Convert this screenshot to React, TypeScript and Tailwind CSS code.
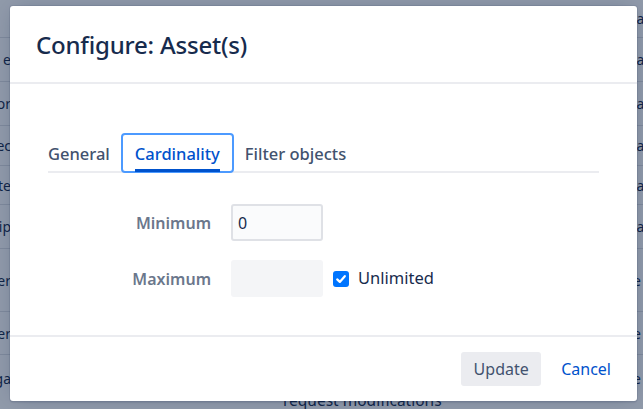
import React from "react";

const rows = [
  { cls: "h-[38px] items-center", l: "", r: "ia" },
  { cls: "h-[44px] items-center", l: "e", r: "ia" },
  { cls: "h-[44px] items-center", l: "or", r: "ia" },
  { cls: "h-[40px] items-center", l: "ec", r: "ia" },
  { cls: "h-[39px] items-center", l: "te", r: "ia" },
  { cls: "h-[44px] items-center", l: "rip", r: "ia" },
  { cls: "h-[63px] items-center", l: "er", r: "e" },
  { cls: "h-[43px] items-center", l: "er", r: "e" },
];

function Check() {
  return (
    <div className="w-[16px] h-[16px] rounded-[3px] bg-[#0075ff] flex items-center justify-center">
      <svg width="12" height="12" viewBox="0 0 12 12" fill="none">
        <path d="M2.2 6.4 L4.8 8.9 L9.8 3.2" stroke="white" strokeWidth="2.2" strokeLinecap="round" strokeLinejoin="round" />
      </svg>
    </div>
  );
}

export default function App() {
  return (
    <div
      className="relative w-[643px] h-[409px] overflow-hidden bg-white"
      style={{ fontFamily: '"Noto Sans", "Open Sans", sans-serif' }}
    >
      {/* background table */}
      <div className="flex flex-col text-[14px] text-[#172b4d]">
        {rows.map((row, i) => (
          <div key={i} className={`flex justify-between border-b border-[#dfe1e6] ${row.cls}`}>
            <div className="w-[11px] flex justify-end overflow-hidden whitespace-nowrap">{row.l}</div>
            <div className="w-[10px] whitespace-nowrap">{row.r}</div>
          </div>
        ))}
        <div className="flex justify-between h-[60px] pt-[14px] leading-[20px]">
          <div className="w-[11px] flex justify-end overflow-hidden whitespace-nowrap">ga</div>
          <div className="flex flex-col text-[15.5px] leading-[21px] ml-[272px]">
            <span>Approve or</span>
            <span>request modifications</span>
          </div>
          <div className="flex-1" />
          <div className="w-[10px] whitespace-nowrap">e</div>
        </div>
      </div>
      <div className="absolute inset-0 bg-[#091e42]/45" />

      {/* modal */}
      <div className="absolute left-[10px] top-[6px] w-[627px] h-[395px] bg-white rounded-[3px] flex flex-col shadow-[0_0_0_1px_rgba(9,30,66,0.08),0_2px_1px_rgba(9,30,66,0.08),0_0_20px_-6px_rgba(9,30,66,0.31)]">
        <div className="h-[78px] border-b-2 border-[#ebecf0] px-[26px] pt-[25px]">
          <h1 className="text-[24px] leading-[28px] font-medium text-[#172b4d] tracking-[-0.2px]">Configure: Asset(s)</h1>
        </div>
        <div className="flex-1 px-[38px] pt-[49px]">
          <div className="h-[40px] flex items-stretch gap-[11px] shadow-[inset_0_-2px_0_#ebecf0] text-[16.5px] font-medium">
            <div className="flex items-center text-[#42526e] pt-[2px]">General</div>
            <div className="relative flex items-center px-[12px] border-2 border-[#4c9aff] rounded-[4px] text-[#0052cc] pt-[2px]">
              Cardinality
              <div className="absolute left-[12px] right-[12px] bottom-[-1px] h-[3px] bg-[#0052cc]" />
            </div>
            <div className="flex items-center text-[#42526e] pt-[2px]">Filter objects</div>
          </div>

          <div className="mt-[31px] flex flex-col gap-[19px] text-[16px]">
            <div className="flex items-center">
              <div className="w-[163px] text-right font-semibold text-[#6b778c]">Minimum</div>
              <div className="ml-[20px] w-[92px] h-[37px] rounded-[3px] border-2 border-[#dfe1e6] bg-[#fafbfc] flex items-center pl-[5px] text-[#172b4d]">
                0
              </div>
            </div>
            <div className="flex items-center">
              <div className="w-[163px] text-right font-semibold text-[#6b778c]">Maximum</div>
              <div className="ml-[20px] w-[92px] h-[37px] rounded-[3px] bg-[#f4f5f7]" />
              <div className="ml-[10px]">
                <Check />
              </div>
              <span className="ml-[9px] text-[16.5px] text-[#172b4d]">Unlimited</span>
            </div>
          </div>
        </div>
        <div className="h-[66px] border-t-2 border-[#ebecf0] flex items-center justify-end pr-[26px] gap-[20px] text-[16px]">
          <div className="h-[34px] w-[80px] rounded-[3px] bg-[#ebecf0] text-[#42526e] flex items-center justify-center">Update</div>
          <div className="text-[#0052cc]">Cancel</div>
        </div>
      </div>
    </div>
  );
}
